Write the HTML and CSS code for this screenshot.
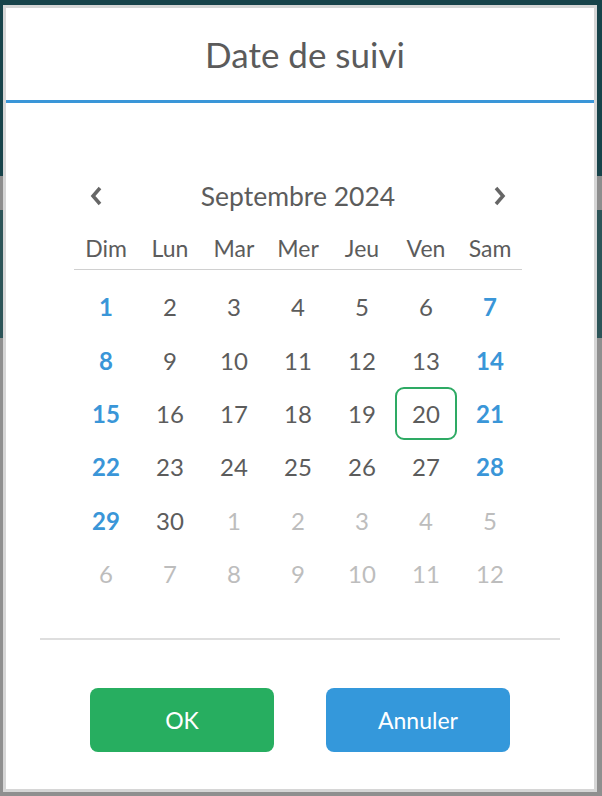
FILE: index.html
```html
<!DOCTYPE html>
<html lang="fr">
  <head>
    <meta charset="UTF-8" />
    <meta name="viewport" content="width=device-width, initial-scale=1.0" />
    <title>Date de suivi</title>
    <link rel="stylesheet" href="styles.css">
  </head>
  <body>
    <div class="modal">
      <h1 class="modal_title">Date de suivi</h1>
      <div class="calendar">
        <div class="cal_head">
          <button class="cal_nav" aria-label="Mois précédent">
            <svg width="16" height="22" viewBox="0 0 16 22"><path d="M12 3 L5 11 L12 19" /></svg>
          </button>
          <span class="cal_month">Septembre 2024</span>
          <button class="cal_nav" aria-label="Mois suivant">
            <svg width="16" height="22" viewBox="0 0 16 22"><path d="M4 3 L11 11 L4 19" /></svg>
          </button>
        </div>
        <div class="cal_week">
          <span>Dim</span><span>Lun</span><span>Mar</span><span>Mer</span><span>Jeu</span><span>Ven</span><span>Sam</span>
        </div>
        <div class="cal_days">
          <span class="we">1</span><span>2</span><span>3</span><span>4</span><span>5</span><span>6</span><span class="we">7</span>
          <span class="we">8</span><span>9</span><span>10</span><span>11</span><span>12</span><span>13</span><span class="we">14</span>
          <span class="we">15</span><span>16</span><span>17</span><span>18</span><span>19</span><span class="sel">20</span><span class="we">21</span>
          <span class="we">22</span><span>23</span><span>24</span><span>25</span><span>26</span><span>27</span><span class="we">28</span>
          <span class="we">29</span><span>30</span><span class="out">1</span><span class="out">2</span><span class="out">3</span><span class="out">4</span><span class="out">5</span>
          <span class="out">6</span><span class="out">7</span><span class="out">8</span><span class="out">9</span><span class="out">10</span><span class="out">11</span><span class="out">12</span>
        </div>
      </div>
      <div class="modal_foot">
        <button class="btn btn_ok">OK</button>
        <button class="btn btn_cancel">Annuler</button>
      </div>
    </div>
  </body>
</html>
```

FILE: styles.css
```css
* {
  margin: 0;
  padding: 0;
  box-sizing: border-box;
}
html,
body {
  height: 100%;
}
body {
  padding: 5px 5px 4px 3px;
  font-family: Lato, "Liberation Sans", sans-serif;
  color: #5c5c5c;
  background: linear-gradient(#17434a 0 176px, #8d8d8d 176px 210px, #2c5458 210px 338px, #8f8f8f 338px);
}
.modal {
  height: 787px;
  border: 3px solid #d6d6d6;
  background-color: #fff;
  display: flex;
  flex-direction: column;
}
.modal_title {
  height: 95px;
  padding-left: 10px;
  display: flex;
  justify-content: center;
  align-items: center;
  font-size: 35px;
  font-weight: 400;
  color: #5b5b5b;
  border-bottom: 3px solid #3a96d8;
}
.calendar {
  width: 448px;
  margin: 67px 0 0 68px;
}
.cal_head {
  height: 52px;
  display: flex;
  justify-content: space-between;
  align-items: center;
}
.cal_month {
  font-size: 26.5px;
}
.cal_nav {
  width: 44px;
  height: 40px;
  border: none;
  background: none;
  display: flex;
  justify-content: center;
  align-items: center;
}
.cal_nav path {
  fill: none;
  stroke: #666;
  stroke-width: 3.5;
}
.cal_week {
  height: 44px;
  margin-top: 4px;
  display: grid;
  grid-template-columns: repeat(7, 1fr);
  align-items: center;
  text-align: center;
  font-size: 23px;
  border-bottom: 1px solid #d0d0d0;
}
.cal_days {
  margin-top: 10px;
  display: grid;
  grid-template-columns: repeat(7, 1fr);
  grid-auto-rows: 53.4px;
}
.cal_days span {
  display: flex;
  justify-content: center;
  align-items: center;
  font-size: 24px;
  border-radius: 9px;
}
.cal_days .we {
  color: #3a96d8;
  font-weight: 700;
}
.cal_days .out {
  color: #bdbdbd;
}
.cal_days .sel {
  border: 2px solid #2eaa64;
  margin: 0 1px;
}
.modal_foot {
  margin: 38px 34px 0;
  padding-top: 48px;
  border-top: 2px solid #dedede;
  display: flex;
  justify-content: center;
  gap: 52px;
}
.btn {
  width: 184px;
  height: 64px;
  border: none;
  border-radius: 8px;
  color: #fff;
  font-family: Lato, "Liberation Sans", sans-serif;
  font-size: 23px;
}
.btn_ok {
  background-color: #27ae60;
}
.btn_cancel {
  background-color: #3498db;
}
```
